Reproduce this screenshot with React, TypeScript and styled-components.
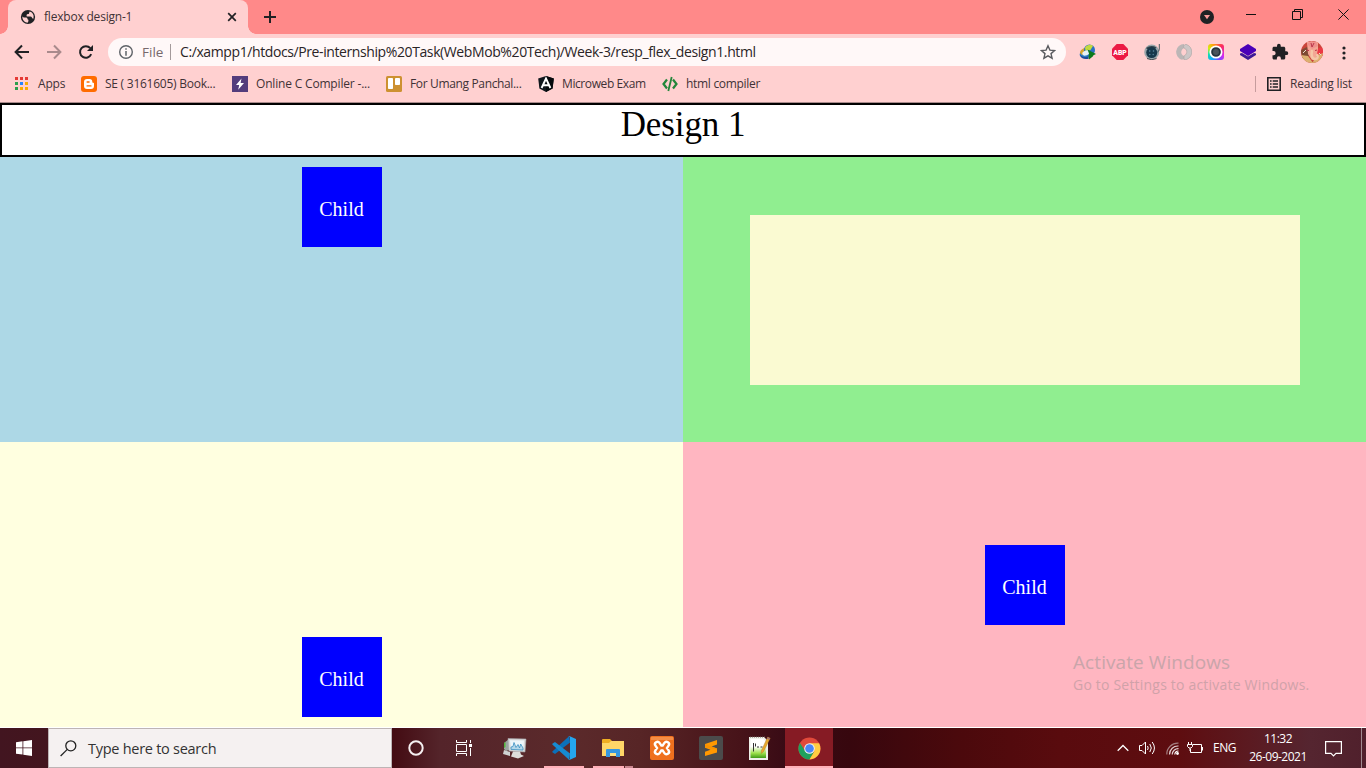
import React from 'react';
import styled, { createGlobalStyle } from 'styled-components';

const Global = createGlobalStyle`
  * { box-sizing: border-box; }
  body { margin: 0; overflow: hidden; background: #fff; }
  svg { display: block; flex: none; }
`;

const ui = `'Open Sans', 'Noto Sans', sans-serif`;

const Screen = styled.div`
  width: 1366px;
  height: 768px;
  display: flex;
  flex-direction: column;
  overflow: hidden;
  font-family: ${ui};
`;

const Label = styled.span<{ $size?: number; $spacing?: number; $color?: string }>`
  font-size: ${(p) => p.$size ?? 12}px;
  letter-spacing: ${(p) => p.$spacing ?? 0}px;
  color: ${(p) => p.$color ?? '#3f3236'};
  line-height: 16px;
  white-space: nowrap;
`;

/* ---------- browser chrome ---------- */

const TabStrip = styled.div`
  height: 34px;
  flex: none;
  display: flex;
  background: #ff8989;
`;

const Tab = styled.div`
  position: relative;
  margin-left: 8px;
  width: 240px;
  height: 34px;
  padding: 0 8px 0 12px;
  display: flex;
  align-items: center;
  border-radius: 8px 8px 0 0;
  background: #ffd0d0;
  &::before,
  &::after {
    content: '';
    position: absolute;
    bottom: 0;
    width: 8px;
    height: 8px;
  }
  &::before {
    left: -8px;
    background: radial-gradient(circle at 0 0, transparent 7.5px, #ffd0d0 8px);
  }
  &::after {
    right: -8px;
    background: radial-gradient(circle at 100% 0, transparent 7.5px, #ffd0d0 8px);
  }
`;

const TabTitle = styled.div`
  flex: 1;
  display: flex;
  padding-left: 8px;
`;

const NewTab = styled.div`
  width: 44px;
  display: flex;
  align-items: center;
  justify-content: center;
`;

const WindowButtons = styled.div`
  margin-left: auto;
  display: flex;
`;

const WindowButton = styled.div<{ $w: number }>`
  width: ${(p) => p.$w}px;
  height: 29px;
  display: flex;
  align-items: center;
  justify-content: center;
`;

const Toolbar = styled.div`
  height: 36px;
  flex: none;
  display: flex;
  align-items: center;
  padding-left: 6px;
  background: #ffd0d0;
`;

const ToolCell = styled.div`
  width: 32px;
  height: 32px;
  display: flex;
  align-items: center;
  justify-content: center;
`;

const AddressBar = styled.div`
  width: 958px;
  height: 28px;
  margin: 0 6px;
  padding: 0 10px 0 11px;
  display: flex;
  align-items: center;
  border-radius: 14px;
  background: #fff8f8;
`;

const Scheme = styled.div`
  width: 29px;
  height: 16px;
  margin: 0 9px;
  display: flex;
  align-items: center;
  border-right: 1px solid #a39a9b;
`;

const Grow = styled.div`
  flex: 1;
  display: flex;
`;

const Bookmarks = styled.div`
  height: 33px;
  flex: none;
  display: flex;
  padding: 0 14px;
  border-bottom: 1px solid #a88a8b;
  background: #ffd0d0;
`;

const Bookmark = styled.div<{ $w?: number }>`
  width: ${(p) => (p.$w ? `${p.$w}px` : 'auto')};
  height: 28px;
  display: flex;
  align-items: center;
  gap: 8px;
`;

const AppsBookmark = styled(Bookmark)`
  gap: 10px;
`;

const ReadingList = styled(Bookmark)`
  margin-left: auto;
  gap: 0;
`;

const ReadingDivider = styled.div`
  width: 1px;
  height: 16px;
  margin-right: 11px;
  background: #c69c9d;
`;

const ReadingText = styled.div`
  width: 62px;
  display: flex;
  margin-left: 9px;
`;

/* ---------- web page ---------- */

const Heading = styled.h1`
  height: 54px;
  flex: none;
  margin: 0;
  border: 2px solid #000;
  background: #fff;
  font: 400 35px/40px 'Liberation Serif', serif;
  letter-spacing: -0.1px;
  text-align: center;
  color: #000;
`;

const Panels = styled.main`
  display: grid;
  grid-template-columns: 683px 683px;
  grid-template-rows: 285px 285px;
  flex: none;
  height: 571px;
`;

const Panel = styled.section<{ $bg: string; $align: string }>`
  display: flex;
  justify-content: center;
  align-items: ${(p) => p.$align};
  padding: 10px;
  background: ${(p) => p.$bg};
`;

const Child = styled.div`
  width: 80px;
  height: 80px;
  background: #00f;
  color: #fff;
  font: 20px/85px 'Liberation Serif', serif;
  text-align: center;
`;

const Inner = styled.div`
  width: 550px;
  height: 170px;
  margin-top: 1px;
  background: #fafad2;
`;

const Watermark = styled.div`
  position: absolute;
  left: 1073px;
  top: 650px;
  display: flex;
  flex-direction: column;
`;

const WatermarkLine = styled(Label)<{ $h: number }>`
  line-height: ${(p) => p.$h}px;
`;

/* ---------- taskbar ---------- */

const Taskbar = styled.footer`
  height: 40px;
  flex: none;
  display: flex;
  background: linear-gradient(
    90deg,
    #421520 0,
    #43151e 48px,
    #430b12 392px,
    #54242a 440px,
    #5b2a2b 570px,
    #572526 640px,
    #471319 740px,
    #390b15 785px,
    #37070e 850px,
    #4b090c 960px,
    #590b0e 1060px,
    #5e0d10 1180px,
    #5b1a21 1250px,
    #552530 1310px,
    #50202c 1366px
  );
`;

const StartButton = styled.div`
  width: 48px;
  display: flex;
  align-items: center;
  justify-content: center;
`;

const SearchBox = styled.div`
  width: 344px;
  display: flex;
  align-items: center;
  gap: 11px;
  padding-left: 11px;
  border: 1px solid #bdb4b5;
  background: #f5f1f1;
`;

const SearchText = styled(Label)`
  padding-top: 1px;
`;

const TaskCell = styled.div<{ $active?: boolean }>`
  position: relative;
  width: ${(p) => (p.$active ? 48 : 49)}px;
  margin-left: ${(p) => (p.$active ? 1 : 0)}px;
  height: 40px;
  display: flex;
  align-items: center;
  justify-content: center;
  background: ${(p) => (p.$active ? '#861b24' : 'transparent')};
`;

const Underline = styled.div<{ $left: number; $w: number; $dim?: boolean }>`
  position: absolute;
  bottom: 0;
  left: ${(p) => p.$left}px;
  width: ${(p) => p.$w}px;
  height: 2px;
  background: ${(p) => (p.$dim ? '#c9868f' : '#ffb0b8')};
`;

const Tray = styled.div`
  margin-left: auto;
  display: flex;
  align-items: center;
`;

const TrayCell = styled.div<{ $w: number }>`
  width: ${(p) => p.$w}px;
  display: flex;
  justify-content: center;
`;

const Clock = styled.div`
  width: 70px;
  height: 40px;
  padding-top: 2px;
  display: flex;
  flex-direction: column;
  align-items: center;
`;

const ClockLine = styled(Label)`
  line-height: 18px;
`;

const ShowDesktop = styled.div`
  width: 5px;
  height: 40px;
  margin-left: 8px;
  border-left: 1px solid #a08a90;
`;

/* ---------- icons ---------- */

const Globe = () => (
  <svg width="16" height="16" viewBox="0 0 16 16">
    <circle cx="8" cy="8" r="7.1" fill="#202124" />
    <path d="M2.400 7.600l1.300.9h2.300q1.500 0 1.500 1.400 0 .7.900.9v1.500l-.8 1.500Q3.200 13.200 2.400 9z" fill="#ffd0d0" />
    <path d="M9.600 2.400q3 .6 3.900 3.900.4 2-.3 3.600-.9-.6-1.300-1.500-.4-.8-1.600-.8H7.800q-1.300 0-1.300-1.200 0-1.200 1.300-1.300 1.300 0 1.300-1.200z" fill="#ffd0d0" />
  </svg>
);

const TabClose = () => (
  <svg width="16" height="16" viewBox="0 0 16 16">
    <path d="M4.200 4.200l7.600 7.600M11.800 4.200l-7.600 7.600" stroke="#202124" strokeWidth="1.700" />
  </svg>
);

const Plus = () => (
  <svg width="12" height="12" viewBox="0 0 12 12">
    <path d="M6 0v12M0 6h12" stroke="#202124" strokeWidth="2" />
  </svg>
);

const DownBadge = () => (
  <svg width="14" height="14" viewBox="0 0 14 14" style={{ marginTop: 4 }}>
    <circle cx="7" cy="7" r="7" fill="#202124" />
    <path d="M4 5h6l-3 4.300z" fill="#ff9a9a" />
  </svg>
);

const Minimize = () => (
  <svg width="10" height="11" viewBox="0 0 10 11"><path d="M0 5.500h10" stroke="#111" /></svg>
);
const Restore = () => (
  <svg width="11" height="11" viewBox="0 0 11 11" fill="none" stroke="#111">
    <path d="M.5 2.500h8v8h-8zM2.500 2.500v-2h8v8h-2" />
  </svg>
);
const WindowClose = () => (
  <svg width="11" height="11" viewBox="0 0 11 11"><path d="M.4.400l10.200 10.200M10.600.4L.4 10.600" stroke="#111" /></svg>
);

const Arrow = ({ forward }: { forward?: boolean }) => (
  <svg width="16" height="16" viewBox="0 0 16 16" fill="none" stroke={forward ? '#a98a8c' : '#202124'} strokeWidth="2">
    {forward ? <path d="M1 8h13M8 1.500L14.400 8 8 14.500" /> : <path d="M15 8H2M8 1.500L1.600 8 8 14.500" />}
  </svg>
);

const Reload = () => (
  <svg width="16" height="16" viewBox="0 0 16 16">
    <path d="M13.200 10.200A5.800 5.800 0 1 1 12.300 4.200" fill="none" stroke="#202124" strokeWidth="2" />
    <path d="M15 1v6H9z" fill="#202124" />
  </svg>
);

const Info = () => (
  <svg width="14" height="14" viewBox="0 0 14 14">
    <circle cx="7" cy="7" r="6.300" fill="none" stroke="#5f6368" strokeWidth="1.400" />
    <path d="M7 3.200v1.600M7 6v4.800" stroke="#5f6368" strokeWidth="1.500" />
  </svg>
);

const Star = () => (
  <svg width="16" height="16" viewBox="0 0 16 16">
    <path d="M8 1.800l1.900 4.300 4.700.4-3.600 3.100 1.100 4.600L8 11.800l-4.100 2.400L5 9.600 1.400 6.500l4.700-.4z" fill="none" stroke="#5a5b5f" strokeWidth="1.400" />
  </svg>
);

const DownloadManager = () => (
  <svg width="18" height="16" viewBox="0 0 18 16">
    <ellipse cx="8" cy="9" rx="7.600" ry="4.600" fill="#2f7fc4" transform="rotate(-20 8 9)" />
    <path d="M1 9c0-3 3-5 6-5l-1 5-3 2z" fill="#d7a52e" />
    <circle cx="10.500" cy="6" r="5.500" fill="#2a6fc4" />
    <path d="M6 3.500C8 .5 12 0 14 2l-2.500 4-5 1z" fill="#c3d93c" />
    <ellipse cx="7" cy="9" rx="3.800" ry="2.400" fill="#e6f2f7" transform="rotate(-20 7 9)" />
    <path d="M1 10.500c2 2.500 5 3 8 2l1 2c-4 1.500-8.500 0-9-4z" fill="#1b4a9b" />
    <path d="M8.500 5.500L17 10l-2.600 1.200-.4 1L10 15.500l-.5-3 .5-3z" fill="#0c7a1c" />
  </svg>
);

const AdBlock = () => (
  <svg width="16" height="16" viewBox="0 0 16 16" overflow="visible">
    <path d="M4.700 0h6.600L16 4.700v6.600L11.300 16H4.700L0 11.300V4.700z" fill="#ec1944" />
    <text x="8" y="10.900" textAnchor="middle" textLength="13.500" lengthAdjust="spacingAndGlyphs" fontFamily="Roboto, sans-serif" fontWeight="900" fontSize="7.800" fill="#fff">ABP</text>
  </svg>
);

const Robot = () => (
  <svg width="16" height="16" viewBox="0 0 16 16">
    <circle cx="7.700" cy="8" r="7.500" fill="#98a5aa" />
    <path d="M2 4Q7 .5 12.500 3.500L11 5H3z" fill="#34434b" />
    <circle cx="7.700" cy="8.600" r="5.500" fill="#17384b" />
    <g fill="#5b8aa3"><circle cx="5.700" cy="7" r=".8" /><circle cx="9.500" cy="7" r=".8" /><circle cx="5.800" cy="10.500" r=".7" /><circle cx="9.200" cy="10.500" r=".7" /></g>
    <path d="M15.300 0v5q0 2.500-2 3" fill="none" stroke="#4c5a60" />
    <path d="M3 14.500q5 2.500 9.500 0" fill="none" stroke="#424c50" />
  </svg>
);

const Ring = () => (
  <svg width="16" height="16" viewBox="0 0 16 16">
    <path d="M8 0a8 8 0 0 0-2 15.700c2.500-.7 3.200-2.200 2-3.700C5.500 11 5 9 5.300 7.500 5.700 5.500 7 4.500 8 4.200z" fill="#bcb6b6" />
    <path d="M8 16A8 8 0 0 0 10 .3C7.500 1 6.800 2.500 8 4c2.500 1 3 3 2.700 4.500-.4 2-1.700 3-2.700 3.300z" fill="#cdc7c7" stroke="#a9a3a3" strokeWidth=".6" />
  </svg>
);

const RainbowBox = styled.div`
  width: 16px;
  height: 16px;
  border-radius: 3px;
  background: conic-gradient(from 45deg, #fb2c60, #d62cf0 20%, #6f4cff 32%, #12a7ff 45%, #12dfae 58%, #d4ed12 70%, #ff9d10 82%, #fb2c60);
`;

const Camera = () => (
  <RainbowBox>
    <svg width="16" height="16" viewBox="0 0 16 16">
      <circle cx="8" cy="8" r="5.700" fill="#26343d" stroke="#fff" strokeWidth="1.700" />
      <circle cx="8" cy="8" r="3" fill="#49545b" />
    </svg>
  </RainbowBox>
);

const Layers = () => (
  <svg width="16" height="16" viewBox="0 0 16 16">
    <path d="M0 9.500l2-.5 6 3.500L14 9l2 .5V11l-8 5-8-5z" fill="#3d1997" />
    <path d="M8 0l8 5v2l-8 5-8-5V5z" fill="#4900b8" />
  </svg>
);

const Puzzle = () => (
  <svg width="18" height="18" viewBox="0 0 24 24">
    <path d="M20.500 11H19V7c0-1.100-.9-2-2-2h-4V3.500a2.500 2.500 0 0 0-5 0V5H4c-1.100 0-2 .9-2 2v3.800h1.500a2.700 2.700 0 0 1 0 5.400H2V20c0 1.100.9 2 2 2h3.800v-1.500a2.700 2.700 0 0 1 5.400 0V22H17c1.100 0 2-.9 2-2v-4h1.500a2.500 2.500 0 0 0 0-5z" fill="#202124" />
  </svg>
);

const Avatar = () => (
  <svg width="22" height="22" viewBox="0 0 22 22">
    <defs><clipPath id="face"><circle cx="11" cy="11" r="11" /></clipPath></defs>
    <g clipPath="url(#face)">
      <rect width="22" height="22" fill="#c9453a" />
      <path d="M0 9l6-3 3 4-2 7-6 1z" fill="#7e4b34" />
      <path d="M15 8l7-2v10l-5 1z" fill="#ec3944" />
      <path d="M6 1h11l0 7-2 9-4 2-4-6z" fill="#f3a694" />
      <path d="M6 3l4-3 5 1 2 4-6 3z" fill="#ef8f8c" />
      <path d="M0 14l7 1 5 7H0zM17 14l5-2v10H11z" fill="#dcb070" />
      <path d="M11 9c-1 6 0 9 3 9s3-2 2-5" fill="none" stroke="#f5c7a8" strokeWidth="2.500" />
      <path d="M10 2l1 4 2-4M5 9l3 .5M14 9.500l2-.5" stroke="#b8354a" fill="none" />
      <path d="M2 12l3-3M18 12l2 2" stroke="#eee1cf" />
    </g>
  </svg>
);

const Dots = () => (
  <svg width="4" height="14" viewBox="0 0 4 14" fill="#202124" style={{ marginTop: 1 }}>
    <circle cx="2" cy="2" r="1.600" /><circle cx="2" cy="7" r="1.600" /><circle cx="2" cy="12" r="1.600" />
  </svg>
);

const appColors = ['#e53935', '#e53935', '#e53935', '#2e9e4d', '#2684fc', '#f9ab00', '#2e9e4d', '#f9ab00', '#f9ab00'];
const AppsGrid = () => (
  <svg width="14" height="14" viewBox="0 0 14 14">
    {appColors.map((c, i) => (
      <rect key={i} x={1 + (i % 3) * 5} y={Math.floor(i / 3) * 5} width="3" height="3" fill={c} />
    ))}
  </svg>
);

const Blogger = () => (
  <svg width="16" height="16" viewBox="0 0 16 16">
    <rect width="16" height="16" rx="3" fill="#ff6c00" />
    <path d="M6 3h2.500A2.800 2.800 0 0 1 11.300 5.800c0 .8.300 1 .9 1s.8.300.8.8V10a3 3 0 0 1-3 3H6a3 3 0 0 1-3-3V6a3 3 0 0 1 3-3z" fill="#fff" />
    <path d="M6.100 6h2M6.100 9.900h3.900" stroke="#ff6c00" strokeWidth="1.300" strokeLinecap="round" />
  </svg>
);

const Bolt = () => (
  <svg width="16" height="16" viewBox="0 0 16 16">
    <rect width="16" height="16" fill="#533c7c" />
    <path d="M9.500 2.500L4 9h3.200l-1 4.700L12 7H8.600z" fill="#fff" />
  </svg>
);

const Board = () => (
  <svg width="16" height="16" viewBox="0 0 16 16">
    <rect width="16" height="16" rx="1.500" fill="#cd9131" />
    <rect x="2" y="2" width="5" height="11" rx=".8" fill="#fff" />
    <rect x="9" y="2" width="5" height="7" rx=".8" fill="#fff" />
  </svg>
);

const Angular = () => (
  <svg width="16" height="16" viewBox="0 0 16 16">
    <path d="M8 0l7.800 2.500-1.200 10L8 16l-6.600-3.500L.2 2.500z" fill="#10171d" />
    <path d="M8 0l7.800 2.500-1.200 10L8 16z" fill="#05090c" />
    <path d="M3.600 12L8 2.600 12.400 12M5.400 9.200h5.200" fill="none" stroke="#fff" strokeWidth="1.900" />
  </svg>
);

const Code = () => (
  <svg width="16" height="16" viewBox="0 0 16 16" fill="none" stroke="#23863a" strokeWidth="2.200">
    <path d="M5 3.500L1.500 8 5 12.500M11 3.500L14.500 8 11 12.500" />
    <path d="M9.700 1L6.300 15" strokeWidth="1.800" />
  </svg>
);

const ListIcon = () => (
  <svg width="14" height="14" viewBox="0 0 14 14">
    <path d="M.8.800h12.400v12.400H.8z" fill="none" stroke="#202124" strokeWidth="1.600" />
    <path d="M3 4h1.600M3 7h1.600M3 10h1.600M5.700 4H11M5.700 7H11M5.700 10H11" stroke="#202124" strokeWidth="1.400" />
  </svg>
);

const WindowsLogo = () => (
  <svg width="16" height="16" viewBox="0 0 16 16" fill="#fff">
    <path d="M0 2.200L6.500 1.300v6.200H0zM7.300 1.200L16 0v7.500H7.300zM0 8.300h6.500v6.300L0 13.700zM7.300 8.300H16V16l-8.700-1.200z" />
  </svg>
);

const SearchGlass = () => (
  <svg width="17" height="17" viewBox="0 0 17 17" fill="none" stroke="#222" strokeWidth="1.300">
    <circle cx="10.800" cy="5.800" r="5" /><path d="M7.300 9.400L.6 16" />
  </svg>
);

const Cortana = () => (
  <svg width="16" height="16" viewBox="0 0 16 16" style={{ marginRight: 1 }}><circle cx="8" cy="8" r="6.700" fill="none" stroke="#f5eff0" strokeWidth="2" /></svg>
);

const TaskView = () => (
  <svg width="17" height="16" viewBox="0 0 17 16" fill="none" stroke="#fff" style={{ marginRight: 4 }}>
    <path d="M1.500 0v2.500h10V0M1.500 16v-2.500h10V16M1.500 4.500h10v7h-10zM15.500 0v3M15.500 8v8" />
    <path d="M14 4h3v3h-3z" fill="#fff" stroke="none" />
  </svg>
);

const Monitor = () => (
  <svg width="24" height="22" viewBox="0 0 24 22">
    <path d="M1 6l5-4 3 1v9l-6 2-2-2z" fill="#9aa49f" />
    <path d="M1 6l1.500-1v5l-1.500 1z" fill="#52b53b" />
    <path d="M5 1.500L23 2l-1 13-16-1z" fill="#d7d9da" stroke="#a3a5a7" strokeWidth=".6" />
    <path d="M7 3.300l14 .3-.7 9.400L8 12.400z" fill="#edf6fa" />
    <path d="M8 10l2-.5 1-4 2 5 2-3 1.500 3.500 1.200-4L20 11v2l-12-.6z" fill="#b5d8ea" stroke="#3a8fc0" strokeWidth=".8" />
    <path d="M10 14.500h7l1 3 3 1.500-6 2.500-7-2z" fill="#dededb" />
    <path d="M1 13l6 2v4l-7-2z" fill="#cfd2d2" />
  </svg>
);

const VsCode = () => (
  <svg width="24" height="24" viewBox="0 0 24 24">
    <path d="M18 6.500L3 18 .3 16.200V15.400L17.300 0z" fill="#0b70b9" />
    <path d="M18 17.500L3 6 .3 7.800v.8L17.300 24z" fill="#168bd1" />
    <path d="M17.300 0L24 3v18l-6.700 3-1-.6c1 .5 1.700 0 1.700-1V1.600c0-1-.7-1.500-1.700-1z" fill="#25a6ee" />
  </svg>
);

const Folder = () => (
  <svg width="22" height="20" viewBox="0 0 22 20">
    <path d="M0 2q0-1 1-1h7l2 2h11q1 0 1 1v14H0z" fill="#f0ae22" />
    <path d="M0 5h7l2-2h13v15H0z" fill="#ffd667" />
    <path d="M4 19v-7q0-1 1-1h12q1 0 1 1v7h-4v-4H8v4z" fill="#3697e0" />
    <path d="M8 15h6v3H8z" fill="#fee083" />
  </svg>
);

const xamppShape = 'M7.500 8.300L10 12L7.500 15.700M16.500 8.300L14 12L16.500 15.700M10 12h4';
const Xampp = () => (
  <svg width="24" height="24" viewBox="0 0 24 24" fill="none" strokeLinecap="round" strokeLinejoin="round">
    <rect width="24" height="24" rx="2" fill="#ef701e" />
    <path d="M1 1h22v3H1z" fill="#f7a060" opacity=".6" />
    <path d={xamppShape} stroke="#fff" strokeWidth="7.400" />
    <path d={xamppShape} stroke="#ef701e" strokeWidth="2.600" />
  </svg>
);

const Sublime = () => (
  <svg width="24" height="24" viewBox="0 0 24 24">
    <rect width="24" height="24" rx="2" fill="#4b4b4b" />
    <path d="M6 8l12-4v4.500l-5.500 2L18 12.500v4L6 20v-4.300l5.500-1.900L6 11.700z" fill="#ff9800" />
    <path d="M6 8l12 4.500v.7L6 11.700z" fill="#f79200" />
  </svg>
);

const Notepad = () => (
  <svg width="22" height="24" viewBox="0 0 22 24">
    <defs><linearGradient id="page" x1="0" x2="0" y1="0" y2="1"><stop offset=".4" stopColor="#fff" /><stop offset=".75" stopColor="#9be04a" /><stop offset="1" stopColor="#3f9a17" /></linearGradient></defs>
    <path d="M0 1h15l4 4v19H0z" fill="#eef0ea" />
    <path d="M1.500 3h13l2.500 3v16h-15.500z" fill="url(#page)" />
    <path d="M1 1.200h15" stroke="#8e8c80" strokeDasharray="1 1" />
    <path d="M4.500 7v8.500M6.500 7.500v3M8 11h2M11.500 11h2" stroke="#333" fill="none" />
    <path d="M18.700 1l2.500 1.200-6.700 13.500-2.300 1.800.2-3z" fill="#e8a82c" stroke="#a5762a" strokeWidth=".4" />
    <path d="M18.700 1l2.500 1.200-.9 1.700-2.500-1.200z" fill="#a0706e" />
  </svg>
);

const Chrome = () => (
  <svg width="23" height="23" viewBox="0 0 48 48">
    <circle cx="24" cy="24" r="23" fill="#e14a3b" />
    <path d="M4 12.500A23 23 0 0 0 24 47l10-17-10 4-9-5z" fill="#1fa15d" />
    <path d="M24 47A23 23 0 0 0 44 13H24l9 6 1 11z" fill="#ffcd42" />
    <circle cx="24" cy="24" r="11" fill="#f5f3f3" />
    <circle cx="24" cy="24" r="9" fill="#4a86f7" />
  </svg>
);

const TrayChevron = () => (
  <svg width="12" height="8" viewBox="0 0 12 8" fill="none" stroke="#fff" strokeWidth="1.300"><path d="M.7 6.800L6 1.500l5.300 5.300" /></svg>
);
const Speaker = () => (
  <svg width="18" height="14" viewBox="0 0 18 14" fill="none" stroke="#fff" style={{ marginRight: 1 }}>
    <path d="M1.500 4.500H4L7.500 1v12L4 9.500H1.500zM9.500 5q1.400 2 0 4M11.800 3q3 4 0 8M14.200 1q4.500 6 0 12" />
  </svg>
);
const Wifi = () => (
  <svg width="13" height="13" viewBox="0 0 13 13" fill="none">
    <path d="M.8 12.500A11 11 0 0 1 12.500 1.200" stroke="#a27b7e" strokeWidth="1.200" />
    <path d="M3.500 12.500a8.500 8.500 0 0 1 9-8.500M6.200 12.500a6 6 0 0 1 6.300-5.800" stroke="#e4d2d3" strokeWidth="1.200" />
    <path d="M8.800 12.500A3.800 3.800 0 0 1 12.500 9" stroke="#fff" strokeWidth="1.200" /><circle cx="11.500" cy="11.500" r="1.400" fill="#fff" />
  </svg>
);
const Battery = () => (
  <svg width="17" height="12" viewBox="0 0 17 12" fill="none" stroke="#fff">
    <path d="M6 2.500h8.500v8H3.500V7M15.500 5v3.500M1.500 0v2.500M4.500 0v2.500" />
    <path d="M.5 2.500h5v2L4 6H2L.5 4.500zM3 6v3" />
  </svg>
);
const Notice = () => (
  <svg width="17" height="17" viewBox="0 0 17 17" fill="none" stroke="#fff" strokeWidth="1.200">
    <path d="M.6 1.600h15.800v11.800H11L8.500 16 6 13.400H.6z" />
  </svg>
);

/* ---------- data ---------- */

const bookmarks = [
  { icon: <Blogger />, text: 'SE ( 3161605) Book...', w: 151, s: -0.25 },
  { icon: <Bolt />, text: 'Online C Compiler -...', w: 154, s: -0.18 },
  { icon: <Board />, text: 'For Umang Panchal...', w: 152, s: -0.35 },
  { icon: <Angular />, text: 'Microweb Exam', w: 124, s: -0.4 },
  { icon: <Code />, text: 'html compiler', w: 110, s: -0.3 },
];

const extensions = [<DownloadManager />, <AdBlock />, <Robot />, <Ring />, <Camera />, <Layers />, <Puzzle />, <Avatar />, <Dots />];

export default function App() {
  return (
    <Screen>
      <Global />
      <TabStrip>
        <Tab>
          <Globe />
          <TabTitle><Label $spacing={-0.2}>flexbox design-1</Label></TabTitle>
          <TabClose />
        </Tab>
        <NewTab><Plus /></NewTab>
        <WindowButtons>
          <WindowButton $w={42}><DownBadge /></WindowButton>
          <WindowButton $w={46}><Minimize /></WindowButton>
          <WindowButton $w={46}><Restore /></WindowButton>
          <WindowButton $w={46}><WindowClose /></WindowButton>
        </WindowButtons>
      </TabStrip>
      <Toolbar>
        <ToolCell><Arrow /></ToolCell>
        <ToolCell><Arrow forward /></ToolCell>
        <ToolCell><Reload /></ToolCell>
        <AddressBar>
          <Info />
          <Scheme><Label $size={13.5} $color="#77696c">File</Label></Scheme>
          <Grow>
            <Label $size={14} $spacing={-0.4} $color="#2a2426">
              C:/xampp1/htdocs/Pre-internship%20Task(WebMob%20Tech)/Week-3/resp_flex_design1.html
            </Label>
          </Grow>
          <Star />
        </AddressBar>
        {extensions.map((icon, i) => <ToolCell key={i}>{icon}</ToolCell>)}
      </Toolbar>
      <Bookmarks>
        <AppsBookmark $w={67}><AppsGrid /><Label $spacing={-0.2}>Apps</Label></AppsBookmark>
        {bookmarks.map((b) => (
          <Bookmark key={b.text} $w={b.w}>{b.icon}<Label $spacing={b.s}>{b.text}</Label></Bookmark>
        ))}
        <ReadingList>
          <ReadingDivider />
          <ListIcon />
          <ReadingText><Label $spacing={-0.2}>Reading list</Label></ReadingText>
        </ReadingList>
      </Bookmarks>

      <Heading>Design 1</Heading>
      <Panels>
        <Panel $bg="#add8e6" $align="flex-start"><Child>Child</Child></Panel>
        <Panel $bg="#90ee90" $align="center"><Inner /></Panel>
        <Panel $bg="#ffffe0" $align="flex-end"><Child>Child</Child></Panel>
        <Panel $bg="#ffb6c1" $align="center"><Child>Child</Child></Panel>
      </Panels>
      <Watermark>
        <WatermarkLine $h={24} $size={19} $spacing={0.08} $color="#c9a5aa">Activate Windows</WatermarkLine>
        <WatermarkLine $h={21} $size={14} $spacing={0.2} $color="#d0a2a9">Go to Settings to activate Windows.</WatermarkLine>
      </Watermark>

      <Taskbar>
        <StartButton><WindowsLogo /></StartButton>
        <SearchBox><SearchGlass /><SearchText $size={14.5} $spacing={-0.27} $color="#333">Type here to search</SearchText></SearchBox>
        <TaskCell><Cortana /></TaskCell>
        <TaskCell><TaskView /></TaskCell>
        <TaskCell><Monitor /></TaskCell>
        <TaskCell><VsCode /><Underline $left={5} $w={40} /></TaskCell>
        <TaskCell><Folder /><Underline $left={5} $w={31} /><Underline $left={37} $w={8} $dim /></TaskCell>
        <TaskCell><Xampp /></TaskCell>
        <TaskCell><Sublime /></TaskCell>
        <TaskCell><Notepad /></TaskCell>
        <TaskCell $active><Chrome /><Underline $left={0} $w={48} /></TaskCell>
        <Tray>
          <TrayCell $w={24}><TrayChevron /></TrayCell>
          <TrayCell $w={25}><Speaker /></TrayCell>
          <TrayCell $w={25}><Wifi /></TrayCell>
          <TrayCell $w={21}><Battery /></TrayCell>
          <TrayCell $w={37}><Label $spacing={-0.4} $color="#fff">ENG</Label></TrayCell>
          <Clock>
            <ClockLine $spacing={-0.5} $color="#fff">11:32</ClockLine>
            <ClockLine $spacing={-0.5} $color="#fff">26-09-2021</ClockLine>
          </Clock>
          <TrayCell $w={40}><Notice /></TrayCell>
          <ShowDesktop />
        </Tray>
      </Taskbar>
    </Screen>
  );
}
